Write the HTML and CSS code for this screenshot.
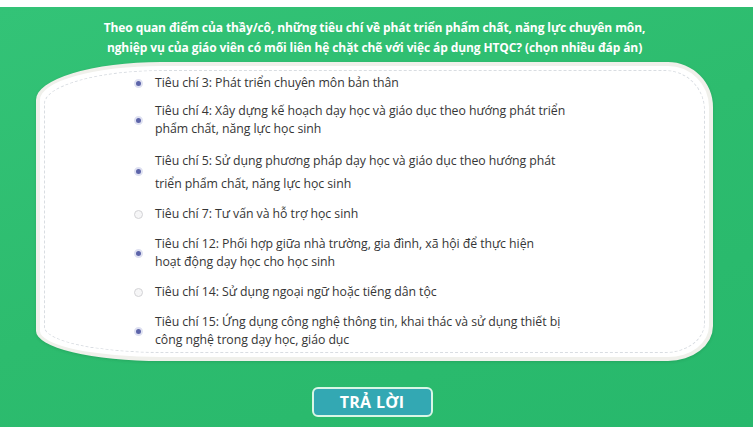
FILE: index.html
```html
<!DOCTYPE html>
<html lang="vi">
<head>
<meta charset="utf-8">
<title>Câu hỏi</title>
<link rel="stylesheet" href="styles.css">
</head>
<body>
<div class="stage">
  <div class="title">Theo quan điểm của thầy/cô, những tiêu chí về phát triển phẩm chất, năng lực chuyên môn,<br>nghiệp vụ của giáo viên có mối liên hệ chặt chẽ với việc áp dụng HTQC? (chọn nhiều đáp án)</div>
  <div class="card">
    <div class="options">
      <div class="opt first"><span class="radio on"></span><span class="label">Tiêu chí 3: Phát triển chuyên môn bản thân</span></div>
      <div class="opt"><span class="radio on"></span><span class="label">Tiêu chí 4: Xây dựng kế hoạch dạy học và giáo dục theo hướng phát triển<br>phẩm chất, năng lực học sinh</span></div>
      <div class="opt"><span class="radio on"></span><span class="label tall">Tiêu chí 5: Sử dụng phương pháp dạy học và giáo dục theo hướng phát<br>triển phẩm chất, năng lực học sinh</span></div>
      <div class="opt"><span class="radio"></span><span class="label">Tiêu chí 7: Tư vấn và hỗ trợ học sinh</span></div>
      <div class="opt"><span class="radio on"></span><span class="label">Tiêu chí 12: Phối hợp giữa nhà trường, gia đình, xã hội để thực hiện<br>hoạt động dạy học cho học sinh</span></div>
      <div class="opt"><span class="radio"></span><span class="label">Tiêu chí 14: Sử dụng ngoại ngữ hoặc tiếng dân tộc</span></div>
      <div class="opt"><span class="radio on"></span><span class="label">Tiêu chí 15: Ứng dụng công nghệ thông tin, khai thác và sử dụng thiết bị<br>công nghệ trong dạy học, giáo dục</span></div>
    </div>
  </div>
  <div class="actions"><button class="answer">TRẢ LỜI</button></div>
</div>
</body>
</html>
```
FILE: styles.css
```css
html, body {
  margin: 0;
  padding: 0;
  background: #ffffff;
}
body {
  width: 753px;
  height: 433px;
  overflow: hidden;
  padding-top: 7px;
  box-sizing: border-box;
}
.stage {
  height: 420px;
  background: linear-gradient(160deg, #33c377 0%, #2dbc6e 50%, #27b86c 100%);
  display: flex;
  flex-direction: column;
  align-items: stretch;
  padding-top: 11px;
  box-sizing: border-box;
  font-family: "Open Sans", "Lato", sans-serif;
}
.title {
  color: #ffffff;
  font-weight: 700;
  font-size: 12px;
  line-height: 20px;
  text-align: center;
  white-space: nowrap;
  letter-spacing: -0.1px;
  padding-right: 4px;
}
.card {
  position: relative;
  margin: 4px 40px 0 36px;
  background: #ffffff;
  border: 4px solid #f0f0eb;
  border-radius: 125px 45px 45px 125px / 38px 45px 35px 30px;
  padding: 8px 0 8px 94px;
  box-shadow: 0 1px 3px rgba(0, 60, 20, 0.15);
}
.card::before {
  content: "";
  position: absolute;
  inset: 4px;
  border: 1px dashed #d9dde2;
  border-radius: 120px 40px 40px 120px / 34px 40px 30px 26px;
  pointer-events: none;
}
.options {
  display: flex;
  flex-direction: column;
  gap: 12px;
}
.opt {
  display: flex;
  align-items: center;
  gap: 12px;
}
.opt.first {
  margin-bottom: -2px;
}
.radio {
  flex: none;
  width: 9px;
  height: 9px;
  border-radius: 50%;
  box-sizing: border-box;
  border: 1px solid #d3d3d6;
  background: #f6f6f7;
}
.radio.on {
  border: 2px solid #dfe1f1;
  background: #5c64a9;
}
.label {
  font-size: 12.3px;
  line-height: 18px;
  color: #363636;
  white-space: nowrap;
  letter-spacing: -0.05px;
}
.label.tall {
  line-height: 23px;
  margin: -1.5px 0;
}
.actions {
  display: flex;
  justify-content: center;
  margin-top: 26px;
  padding-right: 9px;
}
.answer {
  width: 121px;
  height: 30px;
  background: #33a8b3;
  border: 2px solid #d9f6e6;
  border-radius: 6px;
  color: #ffffff;
  font-family: "Open Sans", "Lato", sans-serif;
  font-weight: 700;
  font-size: 16px;
  letter-spacing: 0.3px;
  padding: 0;
}
```
